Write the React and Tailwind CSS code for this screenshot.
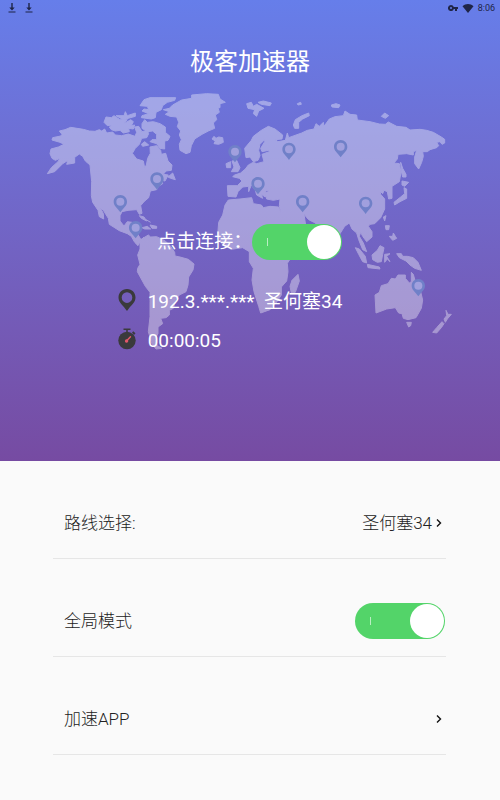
import React, { useState } from 'react';

const pins = [
  [351, 262], [241, 330], [287, 408], [585, 180], [747, 173],
  [654, 276], [788, 330], [902, 165], [977, 335], [1135, 582]
];

const WorldMap = () => (
  <svg viewBox="15 15 1230 786" className="block w-full" aria-hidden="true">
    <g fill="#fff" opacity="0.37" stroke="#fff" strokeWidth="3" strokeLinejoin="round">
      {/* North America */}
      <path d="M22 266 34 248 54 230 60 220 46 226 36 220 30 206 33 192 55 186 72 178 60 172 36 165 38 158 62 153 66 148 58 138 75 134 92 127 130 133 148 138 165 139 178 134 185 138 194 132 200 144 218 141 226 150 245 152 265 147 285 154 290 142 284 126 296 124 306 140 322 136 326 146 320 158 305 160 298 178 286 190 277 205 290 222 310 228 314 248 319 240 323 220 331 205 330 186 350 182 362 196 364 208 377 205 384 228 396 240 394 256 378 258 370 268 385 270 375 288 366 286 368 296 355 304 350 314 331 318 326 338 312 350 302 362 306 385 298 388 290 374 264 376 246 380 240 392 240 408 252 423 262 410 276 412 274 430 290 442 304 466 312 456 302 466 294 482 284 472 274 454 262 446 238 437 208 418 205 400 190 376 180 366 190 386 191 402 178 395 174 376 158 352 154 332 155 290 150 240 136 228 128 214 118 207 104 217 104 234 80 238 84 226 68 236 44 260Z" />
      {/* Arctic islands */}
      <path d="M192 112 198 96 214 98 222 92 240 104 262 104 252 116 272 104 280 110 274 122 284 120 280 132 266 130 268 140 250 144 240 136 226 138 214 134 208 126 216 120 202 122Z" />
      <path d="M228 92 252 92 256 80 262 92 286 84 286 94 250 104Z" />
      <path d="M300 62 312 44 330 38 407 38 404 46 382 52 368 62 364 74 348 82 346 98 334 102 304 98 306 92 326 86 306 78 312 72 326 74 322 64Z" />
      <path d="M306 116 314 104 322 112 340 110 360 116 376 126 376 142 390 154 384 166 374 168 374 192 360 190 350 176 330 170 336 164 350 164 350 148 338 138 322 140 306 130Z" />
      <path d="M304 178 314 170 326 180 308 184Z M384 276 398 264 406 284 392 280Z" />
      {/* Greenland and Iceland */}
      <path d="M370 74 388 70 398 60 425 45 455 40 455 30 500 26 535 28 540 42 556 52 540 56 540 68 534 68 538 82 526 90 530 104 520 114 524 130 505 138 486 148 464 162 454 182 450 202 438 206 420 196 418 178 424 164 418 150 422 138 412 125 416 112 410 96 390 94 376 88 388 80Z" />
      <path d="M516 162 522 154 528 160 536 156 548 158 550 172 536 178 522 176 526 168Z" />
      {/* Caribbean */}
      <path d="M298 392 312 396 320 408 304 400Z M318 404 332 412 M306 428 322 424 332 432 314 432Z M330 420 350 424 350 430 336 430Z" />
      {/* South America */}
      <path d="M300 465 325 450 332 456 350 455 375 467 392 484 404 502 405 513 420 516 445 523 462 537 459 555 446 576 444 600 438 620 418 630 408 642 400 670 388 676 388 690 378 698 362 700 368 716 354 726 354 746 345 762 352 782 366 790 348 792 335 775 325 740 330 695 330 650 330 622 316 604 304 582 292 560 293 550 300 538 293 510 300 492Z" />
      {/* Europe and Asia */}
      <path d="M562 302 592 302 606 288 598 280 578 275 584 270 602 264 616 252 625 240 632 236 640 232 650 236 672 230 666 208 688 200 686 196 666 200 662 190 674 170 674 164 660 178 656 196 660 212 654 226 640 230 630 216 618 218 614 190 634 166 640 154 664 136 685 124 705 132 728 150 726 162 706 164 714 170 736 166 742 144 746 158 785 144 802 136 822 132 828 116 838 124 850 112 852 124 868 102 885 95 910 92 915 78 930 88 950 90 952 105 990 110 1018 117 1036 118 1045 111 1070 124 1098 127 1110 135 1140 133 1160 136 1180 142 1204 156 1214 163 1214 174 1206 178 1200 170 1190 172 1196 182 1190 188 1170 194 1162 200 1148 200 1150 214 1145 232 1136 252 1124 236 1124 216 1130 196 1120 200 1120 210 1100 206 1074 208 1072 222 1062 234 1078 236 1083 262 1078 290 1056 304 1056 340 1046 342 1042 320 1032 316 1028 326 1020 318 1022 328 1034 342 1034 372 1022 398 1004 416 990 418 985 424 996 440 996 456 980 470 968 454 962 442 958 454 970 474 980 500 968 494 956 464 950 444 936 432 928 414 914 424 900 446 890 478 870 448 838 430 826 414 806 404 792 388 800 440 760 466 738 444 724 400 722 380 718 362 720 342 700 346 680 342 676 324 688 318 678 316 676 336 664 328 668 340 650 330 646 316 634 300 630 310 626 320 626 304 608 306 594 320 588 336 564 334Z" />
      {/* Africa */}
      <path d="M565 345 600 342 635 338 640 356 664 360 670 368 690 364 716 366 724 388 738 414 754 450 790 468 780 488 755 515 742 535 744 560 740 588 724 606 724 630 708 654 690 674 662 684 656 664 642 620 636 585 640 550 628 530 628 500 608 488 574 493 548 480 533 450 536 412 548 390 555 360Z" />
      <path d="M774 568 778 588 766 622 754 624 750 604 756 586Z" />
      {/* British Isles and northern islands */}
      <path d="M576 228 590 226 600 248 594 260 574 260 582 246Z M558 236 572 230 572 248 560 248Z" />
      <path d="M620 56 634 52 640 64 650 58 672 70 656 78 650 94 640 86 644 74 624 70Z M654 52 670 48 694 54 690 62 664 58Z" />
      <path d="M760 120 766 104 786 92 806 84 808 92 788 102 776 112 776 130 764 130Z M772 56 782 52 784 58 774 60Z M874 60 888 56 900 60 896 68 876 66Z M1024 94 1034 84 1046 92 1036 100Z" />
      {/* Japan and south-east Asia */}
      <path d="M1082 232 1088 250 1098 268 1098 276 1088 276 1084 258Z M1086 288 1106 292 1094 304 1086 300Z M1092 308 1100 312 1100 340 1080 350 1064 360 1062 352 1082 336 1094 326Z" />
      <path d="M1030 396 1038 392 1034 408Z M1036 422 1048 422 1046 434 1038 434Z M1048 454 1058 454 1060 444 1066 454 1070 460 1058 466Z" />
      <path d="M946 488 958 492 976 514 980 534 968 530 956 508Z M982 538 1018 546 1020 552 984 548Z M996 510 1012 496 1020 482 1032 488 1028 508 1024 530 1012 532 998 524Z M1034 508 1050 506 1040 514 1050 530 1042 522 1034 532Z" />
      <path d="M1070 506 1084 506 1088 514 1102 514 1120 518 1134 532 1144 556 1124 550 1110 540 1098 528 1078 518Z" />
      {/* Australia and New Zealand */}
      <path d="M1005 630 1018 622 1024 602 1044 596 1054 580 1066 582 1074 570 1096 570 1096 580 1108 594 1114 590 1114 562 1120 568 1128 598 1142 620 1148 645 1144 670 1128 698 1104 704 1090 700 1086 686 1076 684 1066 668 1040 672 1008 684Z" />
      <path d="M1100 712 1114 712 1112 722 1106 726Z M1218 676 1224 688 1234 688 1222 702 1216 712 1212 702 1220 692Z M1206 710 1212 716 1204 728 1190 744 1178 742 1190 728Z" />
    </g>
    {pins.map(([x, y]) => (
      <g key={`${x}-${y}`} transform={`translate(${x} ${y})`}>
        <path d="M0 0C-12 0-20 9-20 20-20 32-10 38 0 52 10 38 20 32 20 20 20 9 12 0 0 0Z" fill="#7080c8" />
        <circle cy="20" r="12" fill="#a1a0de" />
      </g>
    ))}
  </svg>
);

const DownloadIcon = () => (
  <svg viewBox="0 0 8 10" className="h-2.5 w-2" fill="#1f2547">
    <path d="M3.3 0h1.4v4.6h2L4 7.4 1.3 4.6h2zM.5 8.6h7v1h-7z" />
  </svg>
);

const Chevron = () => (
  <svg viewBox="0 0 6 10" className="h-2.5 w-1.5" fill="none" stroke="#111" strokeWidth="1.4">
    <path d="M1 1.5 4.5 5 1 8.5" />
  </svg>
);

const Toggle = ({ id, checked, onChange }) => (
  <span className="relative block h-9 w-[90px] shrink-0">
    <input
      id={id}
      type="checkbox"
      role="switch"
      checked={checked}
      onChange={(e) => onChange(e.target.checked)}
      className="peer h-full w-full cursor-pointer appearance-none rounded-full bg-gray-300 checked:bg-[#53d469]"
    />
    <span className="pointer-events-none absolute top-3.5 left-[15px] h-2 w-px bg-white/60" />
    <span className="pointer-events-none absolute top-px left-px h-[34px] w-[34px] rounded-full bg-white transition-transform peer-checked:translate-x-[54px]" />
  </span>
);

function App() {
  const [connected, setConnected] = useState(true);
  const [globalMode, setGlobalMode] = useState(true);

  return (
    <div className="min-h-screen bg-[#fafafa] font-[Roboto,'Noto_Sans_CJK_SC',sans-serif]">
      {/* Connection panel */}
      <header className="relative bg-linear-to-b from-[#667eea] to-[#764ba2] pb-[102px] text-white">
        <div className="absolute inset-x-[45px] top-[90px]">
          <WorldMap />
        </div>

        <div className="relative">
          {/* Status bar */}
          <div className="flex h-4 items-center justify-between pr-[5px] pl-2 text-[#1f2547]">
            <div className="flex gap-[9px]">
              <DownloadIcon />
              <DownloadIcon />
            </div>
            <div className="flex items-center gap-1">
              <svg viewBox="0 0 10 6" className="h-1.5 w-2.5" fill="#1f2547" fillRule="evenodd">
                <path d="M3 0a3 3 0 1 0 2.8 4H7v2h2V4h1V2H5.8A3 3 0 0 0 3 0ZM3 2a1 1 0 1 1 0 2 1 1 0 0 1 0-2Z" />
              </svg>
              <svg viewBox="0 0 12 9" className="h-[9px] w-3" fill="#1f2547">
                <path d="M.5 2.2C3.6-.7 8.4-.7 11.5 2.2L6 9Z" />
              </svg>
              <span className="text-[9px] leading-4">8:06</span>
            </div>
          </div>

          <h1 className="mt-7 text-center text-2xl leading-9 font-normal">极客加速器</h1>

          <div className="mt-36 flex justify-center pr-10">
            <div className="text-[19px]">
              <div className="flex h-9 items-center justify-end">
                <label htmlFor="connect">点击连接：</label>
                <Toggle id="connect" checked={connected} onChange={setConnected} />
              </div>
              <div className="mt-6 flex h-9 items-center gap-3">
                <svg viewBox="0 0 18 22" className="mb-1 h-[22px] w-[18px]" fill="#3a3a3c" fillRule="evenodd">
                  <path d="M9 0C3.8 0 .5 4 .5 8.500.5 13.500 5 16 9 22c4-6 8.500-8.500 8.500-13.500C17.500 4 14.200 0 9 0Zm0 3.300a5.300 5.300 0 1 1 0 10.600A5.300 5.300 0 0 1 9 3.300Z" />
                </svg>
                <span className="whitespace-pre">192.3.***.***  圣何塞34</span>
              </div>
              <div className="mt-[3px] flex h-9 items-center gap-3">
                <svg viewBox="0 0 18 22" className="mb-1 h-[22px] w-[18px]">
                  <path d="M5.5 .5h7v1.4h-2.7v2H8.2v-2H5.5zM14 4.8l1.2-1.5 2.3 1.9-1.2 1.5z" fill="#3a3a3c" />
                  <circle cx="9" cy="12.5" r="8.7" fill="#3a3a3c" />
                  <path d="m8 13.6 4.5-4.8" stroke="#e2586a" strokeWidth="1.4" strokeLinecap="round" />
                  <circle cx="8.6" cy="13" r="1.7" fill="#e2586a" />
                </svg>
                <span>00:00:05</span>
              </div>
            </div>
          </div>
        </div>
      </header>

      {/* Settings */}
      <main className="mr-[54px] ml-[53px] text-[17px] font-light text-[#222]">
        <button type="button" className="flex w-full items-center justify-between border-b border-[#e6e6e6] pt-11 pr-1 pb-[17px] pl-[11px] text-left">
          <span className="leading-9">路线选择:</span>
          <span className="flex items-center gap-1 leading-9">
            圣何塞34
            <Chevron />
          </span>
        </button>

        <div className="flex items-center justify-between border-b border-[#e6e6e6] pt-11 pr-px pb-[17px] pl-[11px]">
          <label htmlFor="global" className="leading-9">全局模式</label>
          <Toggle id="global" checked={globalMode} onChange={setGlobalMode} />
        </div>

        <button type="button" className="flex w-full items-center justify-between border-b border-[#e6e6e6] pt-11 pr-1 pb-[17px] pl-[11px] text-left">
          <span className="leading-9">加速APP</span>
          <Chevron />
        </button>
      </main>
    </div>
  );
}

export default App;
